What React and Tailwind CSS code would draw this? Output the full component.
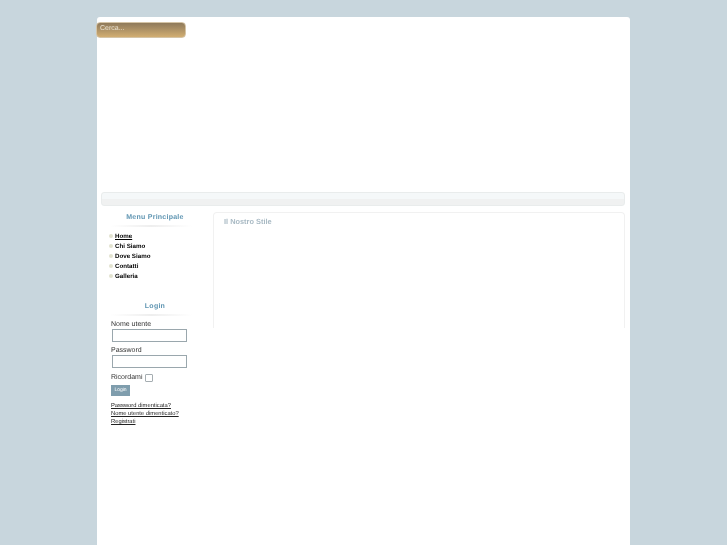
export default function App() {
  const menu = ["Home", "Chi Siamo", "Dove Siamo", "Contatti", "Galleria"];
  return (
    <div className="h-[545px] overflow-hidden bg-[#c8d6dd] font-['Liberation_Sans',sans-serif] [text-rendering:geometricPrecision]">
      <div className="relative ml-[97px] w-[533px] h-[545px] pt-[17px]">
        <div className="h-[528px] bg-white rounded-t-[3px] flex flex-col">
          <div className="absolute left-[-1px] top-[22px] w-[90px] h-[16px] rounded-[4px] bg-gradient-to-b from-[#8f7a5b] to-[#d2ae72] text-[#e9e2d2] text-[7px] leading-[11px] pl-[3px] border border-[#d5c4a6] [will-change:transform]">
            Cerca...
          </div>
          <div className="h-[175px]" />
          <div className="mx-[4px] w-[524px] h-[14px] rounded-[3px] border border-[#e9ecec] bg-[linear-gradient(#f5f8f9_50%,#f0f1f1_50%)]" />
          <div className="flex mt-[6px]">
            <div className="w-[116px] shrink-0 [will-change:transform]">
              <div className="w-[116px] text-center">
                <div className="h-[11px] text-[7px] leading-[12px] font-bold tracking-[0.25px] text-[#5f95b2]">
                  Menu Principale
                </div>
              </div>
              <div className="ml-[13px] mt-[2px] w-[82px] h-[2px] bg-[linear-gradient(90deg,#ffffff,#eeeeee_50%,#ffffff)]" />
              <ul className="mt-[5px] ml-[12px]">
                {menu.map((m, i) => (
                  <li key={m} className="flex items-center h-[10px] text-[6.2px] font-bold text-black">
                    <span className="w-[4px] h-[4px] shrink-0 rounded-full bg-[#e2e2cf] mr-[2px] -mt-[2px]" />
                    <span className={i === 0 ? "underline" : ""}>{m}</span>
                  </li>
                ))}
              </ul>
              <div className="mt-[19px] w-[116px] text-center h-[11px] text-[7px] leading-[12px] font-bold tracking-[0.25px] text-[#5f95b2]">
                Login
              </div>
              <div className="ml-[13px] mt-[2px] w-[82px] h-[2px] bg-[linear-gradient(90deg,#ffffff,#eeeeee_50%,#ffffff)]" />
              <div className="ml-[14px] mt-[2px] text-[7px] text-[#333333]">
                <div className="h-[11px] leading-[13px]">Nome utente</div>
                <div className="ml-[1px] w-[75px] h-[13px] border border-[#9aa7ad] bg-white" />
                <div className="mt-[2px] h-[11px] leading-[13px]">Password</div>
                <div className="ml-[1px] w-[75px] h-[13px] border border-[#9aa7ad] bg-white" />
                <div className="mt-[5px] flex items-center h-[10px]">
                  <span>Ricordami</span>
                  <span className="ml-[2px] w-[8px] h-[8px] border border-[#a5adb1] rounded-[1px] bg-white" />
                </div>
                <div className="mt-[2px] w-[19px] h-[11px] bg-[#7f9dad] text-white text-[5px] leading-[11px] text-center">
                  Login
                </div>
                <div className="mt-[6px] text-[5.8px] leading-[8px] text-[#222222] underline">
                  <div>Password dimenticata?</div>
                  <div>Nome utente dimenticato?</div>
                  <div>Registrati</div>
                </div>
              </div>
            </div>
            <div className="w-[412px] h-[116px] rounded-t-[4px] border-x border-t border-[#f1f1f1] pl-[10px] pt-[3px] text-[7.4px] leading-[12px] font-bold text-[#a9bac4] [will-change:transform]">
              Il Nostro Stile
            </div>
          </div>
        </div>
      </div>
    </div>
  );
}
